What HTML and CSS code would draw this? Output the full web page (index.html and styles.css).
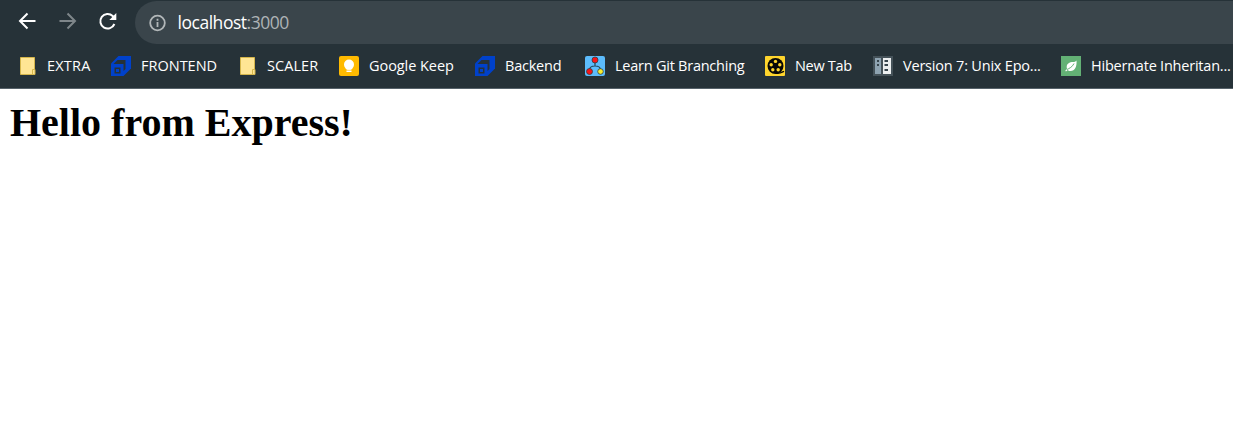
FILE: index.html
```html
<!DOCTYPE html>
<html lang="en">
<head>
<meta charset="utf-8">
<title>localhost:3000</title>
<link rel="stylesheet" href="styles.css">
</head>
<body>
<svg width="0" height="0" class="symbols">
  <symbol id="folder" viewBox="0 0 20 20"><path d="M3.500 1.500h14v12l-.5 5H3.500z" fill="#ffe594" stroke="#d5b64b"/><path d="M15.500 18.500v-5h2.500v5z" fill="#ffe594" stroke="#d5b64b"/></symbol>
  <symbol id="scaler" viewBox="0 0 20 20"><path d="M7.500 0H20v12.500L12.500 20H0V7.500z" fill="#0041ca"/><path d="M6.500 4H14.500V13L12.500 15V8H2.500z" fill="#263238"/><path d="M3.500 11.500H9.500V17.500H3.500z" fill="#263238"/><path d="M5 13h3v3H5z" fill="#0041ca"/></symbol>
</svg>
<header class="browser">
  <div class="toolbar">
    <svg class="nav" viewBox="0 0 20 20"><path d="M18.500 10H3.500M10.500 2.500L3 10l7.500 7.500"/></svg>
    <svg class="nav nav-off" viewBox="0 0 20 20"><path d="M2.500 10h15M10.500 2.500L18 10l-7.500 7.500"/></svg>
    <svg class="nav" viewBox="0 0 20 20"><path d="M17.400 13A7.300 7.300 0 1 1 15.700 5L17.500 7"/><path class="solid" d="M19.300 2v7h-7z"/></svg>
    <div class="address">
      <svg class="info" viewBox="0 0 18 18"><circle cx="8.500" cy="9" r="7.300"/><path d="M8.500 8v5M8.500 4.800v2"/></svg>
      <span class="url">localhost<span class="port">:3000</span></span>
    </div>
  </div>
  <nav class="bookmarks">
    <a class="bookmark b-extra"><svg viewBox="0 0 20 20"><use href="#folder"/></svg><span>EXTRA</span></a>
    <a class="bookmark b-frontend"><svg viewBox="0 0 20 20"><use href="#scaler"/></svg><span>FRONTEND</span></a>
    <a class="bookmark b-scaler"><svg viewBox="0 0 20 20"><use href="#folder"/></svg><span>SCALER</span></a>
    <a class="bookmark b-keep"><svg viewBox="0 0 20 20"><rect width="20" height="20" rx="2" fill="#ffba00"/><circle cx="10" cy="8.600" r="5" fill="#fff"/><path d="M7.500 11h5v2.800h-5zM7.500 14.600h5v1.500h-5z" fill="#fff"/></svg><span>Google Keep</span></a>
    <a class="bookmark b-backend"><svg viewBox="0 0 20 20"><use href="#scaler"/></svg><span>Backend</span></a>
    <a class="bookmark b-git"><svg viewBox="0 0 20 20"><rect width="20" height="20" rx="2" fill="#5cbcfc"/><path d="M10 5v5M4.500 14c0-3 2-4 5.500-4s5.500 1 5.500 4" fill="none" stroke="#24475b" stroke-width="1.200"/><g stroke="#353d3f" stroke-width=".8"><circle cx="10" cy="4" r="3" fill="#f81419"/><circle cx="4.500" cy="15.500" r="3" fill="#f81419"/><circle cx="15.500" cy="15.500" r="2.800" fill="#f7ee2e"/></g></svg><span>Learn Git Branching</span></a>
    <a class="bookmark b-tab"><svg viewBox="0 0 20 20"><rect width="20" height="20" rx="1" fill="#ffd52d"/><circle cx="10.500" cy="10" r="8" fill="#090806"/><g fill="#ffd52d"><circle cx="10.500" cy="5.400" r="1.700"/><circle cx="14.800" cy="8.700" r="1.700"/><circle cx="13.200" cy="13.700" r="1.700"/><circle cx="7.800" cy="13.700" r="1.700"/><circle cx="6.200" cy="8.700" r="1.700"/></g><path d="M11 17.300c4 .5 5-.3 8-2" fill="none" stroke="#090806" stroke-width="1.300"/></svg><span>New Tab</span></a>
    <a class="bookmark b-unix"><svg viewBox="0 0 20 20"><path d="M0 0h20v20H0z" fill="#455259"/><path d="M2 2h6v16H2z" fill="#8ea3b1"/><path d="M10 2h8v16h-8z" fill="#eceff0"/><path d="M4 4h2v2H4zM4 8h2v2H4zM11.500 4H15v2h-3.500zM11.500 8H15v2h-3.500zM11.500 13H15v2h-3.500z" fill="#37454d"/></svg><span>Version 7: Unix Epo...</span></a>
    <a class="bookmark b-hibernate"><svg viewBox="0 0 20 20"><path d="M0 0h20v20H0z" fill="#63b175"/><path d="M15.500 4.500c.5 6-1.500 10.500-6 10.500-1.300 0-2.200-.4-2.800-1L5 15.500l-.8-.8L6 13C4.500 7.500 9 6 12 6c1.500 0 2.500-.5 3.500-1.500z" fill="#fff"/><path d="M6 13.500c2-1 5.500-2.500 7-6" fill="none" stroke="#63b175"/></svg><span>Hibernate Inheritan...</span></a>
  </nav>
</header>
<main class="page"><h1>Hello from Express!</h1></main>
</body>
</html>
```
FILE: styles.css
```css
* { box-sizing: border-box; }
body { margin: 0; background: #fff; overflow: hidden; }
.symbols { display: none; }
.browser { height: 89px; background: #263238; border-bottom: 1px solid #56626a; font-family: "Open Sans", "Noto Sans", sans-serif; }
.toolbar { display: flex; height: 44px; padding: 1px 0 0 17px; }
.nav { flex: none; width: 20px; height: 20px; margin: 10px 20px 0 0; fill: none; stroke: #fff; stroke-width: 2; }
.nav-off { stroke: #7e868a; }
.nav .solid { fill: #fff; stroke: none; }
.address { display: flex; align-items: center; flex: 1; height: 43px; margin-left: -2px; padding-left: 14px; background: #3a454b; border-radius: 22px 0 0 22px; }
.info { width: 18px; height: 18px; fill: none; stroke: #b2b7b9; stroke-width: 1.8; }
.url { margin: -2px 0 0 10.5px; color: #fff; font-size: 17.5px; letter-spacing: -.47px; white-space: nowrap; }
.port { color: #aeb3b6; }
.bookmarks { display: flex; height: 44px; padding-left: 17px; overflow: hidden; }
.bookmark { display: flex; align-items: center; flex: none; gap: 10px; color: #fff; font-size: 14.5px; white-space: nowrap; }
.bookmark svg { flex: none; width: 20px; height: 20px; }
.bookmark span { padding-bottom: 2px; }
.b-extra { width: 94px; letter-spacing: .2px; }
.b-frontend { width: 126px; letter-spacing: 0; }
.b-scaler { width: 102px; letter-spacing: .05px; }
.b-keep { width: 136px; letter-spacing: -.06px; }
.b-backend { width: 110px; letter-spacing: -.22px; }
.b-git { width: 180px; letter-spacing: -.24px; }
.b-tab { width: 108px; letter-spacing: -.3px; }
.b-unix { width: 188px; letter-spacing: -.2px; }
.b-hibernate { width: 172px; letter-spacing: -.22px; }
.page { padding: 11px 10px; font-family: "Liberation Serif", "Times New Roman", serif; }
.page h1 { margin: 0; color: #000; font-size: 40px; line-height: 46px; font-weight: 700; }
```
